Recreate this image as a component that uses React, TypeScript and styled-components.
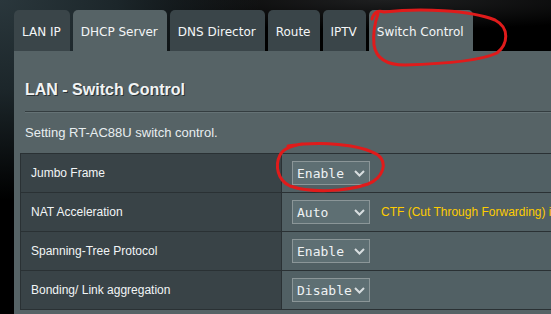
import React from "react";
import styled, { createGlobalStyle } from "styled-components";

const GlobalStyle = createGlobalStyle`
  html, body {
    margin: 0;
    padding: 0;
    width: 551px;
    height: 314px;
    overflow: hidden;
    background: #000;
  }
  body {
    font-family: "Liberation Sans", Arial, sans-serif;
  }
`;

const Page = styled.div`
  position: relative;
  width: 551px;
  height: 314px;
  overflow: hidden;
  padding: 10px 0 0 14px;
  box-sizing: border-box;
  background:
    radial-gradient(ellipse 260px 200px at 0% 0%, #2a373c 0%, #1c262a 45%, rgba(0,0,0,0) 100%),
    radial-gradient(ellipse 300px 30px at 70% 0%, #1e1f20 0%, rgba(0,0,0,0) 100%),
    #000;
`;

const Tabs = styled.div`
  display: flex;
  gap: 3px;
  height: 41px;
`;

const Tab = styled.div<{ $active?: boolean }>`
  display: flex;
  align-items: center;
  padding: 3px 9px 0 8px;
  border-radius: 5px 5px 0 0;
  background: ${(p) => (p.$active ? "#566366" : "#3a4549")};
  color: #f4f6f7;
  font-family: "DejaVu Sans", Verdana, sans-serif;
  font-size: 12px;
  white-space: nowrap;
`;

const Panel = styled.div`
  width: 760px;
  height: 300px;
  background: #566366;
  padding: 0 0 0 6px;
  box-sizing: border-box;
`;

const Header = styled.div`
  padding-left: 5px;
  padding-top: 30px;
`;

const Title = styled.h1`
  margin: 0;
  font-family: "Liberation Sans", Arial, sans-serif;
  font-weight: bold;
  font-size: 16px;
  line-height: 18px;
  color: #f2f4f4;
  text-shadow: 1px 1px 0 #2b3336;
`;

const Rule = styled.div`
  margin-top: 12px;
  height: 1px;
  background: #343d40;
  border-bottom: 1px solid #657275;
`;

const Description = styled.p`
  margin: 12px 0 0 0;
  font-size: 13px;
  line-height: 16px;
  color: #e8eef0;
`;

const Table = styled.table`
  margin-top: 12px;
  border-collapse: collapse;
  table-layout: fixed;
  width: 750px;
`;

const Row = styled.tr`
  height: 39px;
`;

const Label = styled.th`
  width: 261px;
  box-sizing: border-box;
  padding: 0 0 0 10px;
  text-align: left;
  font-weight: normal;
  font-size: 12px;
  color: #f2f5f6;
  background: #394347;
  border: 1px solid #2a3134;
`;

const Cell = styled.td`
  padding: 0 0 0 10px;
  background: #516064;
  border: 1px solid #2a3134;
  overflow: hidden;
`;

const CellInner = styled.div`
  display: flex;
  align-items: center;
`;

const Select = styled.div`
  flex: none;
  width: 78px;
  height: 24px;
  box-sizing: border-box;
  display: flex;
  align-items: center;
  justify-content: space-between;
  padding: 0 4px 0 4px;
  border: 1px solid #8b9698;
  background: #5e6f73;
  color: #eef2f3;
  font-family: "DejaVu Sans Mono", "Liberation Mono", monospace;
  font-size: 13px;
`;

const Hint = styled.span`
  margin-left: 11px;
  color: #ffcc00;
  font-size: 12px;
  white-space: nowrap;
`;

const Annotations = styled.svg`
  position: absolute;
  left: 0;
  top: 0;
  width: 551px;
  height: 314px;
  pointer-events: none;
`;

const Chevron = () => (
  <svg width="11" height="7" viewBox="0 0 11 7">
    <path d="M1 1 L5.5 5.5 L10 1" fill="none" stroke="#d8dee0" strokeWidth="2" />
  </svg>
);

type Setting = { label: string; value: string; hint?: string };

const settings: Setting[] = [
  { label: "Jumbo Frame", value: "Enable" },
  {
    label: "NAT Acceleration",
    value: "Auto",
    hint: "CTF (Cut Through Forwarding) is disabled because of the following reason(s):",
  },
  { label: "Spanning-Tree Protocol", value: "Enable" },
  { label: "Bonding/ Link aggregation", value: "Disable" },
];

const tabs = ["LAN IP", "DHCP Server", "DNS Director", "Route", "IPTV", "Switch Control"];

export default function App() {
  return (
    <>
      <GlobalStyle />
      <Page>
        <Tabs>
          {tabs.map((t) => (
            <Tab key={t} $active={t === "DHCP Server" || t === "Switch Control"}>
              {t}
            </Tab>
          ))}
        </Tabs>
        <Panel>
          <Header>
            <Title>LAN - Switch Control</Title>
            <Rule />
            <Description>Setting RT-AC88U switch control.</Description>
          </Header>
          <Table>
            <tbody>
              {settings.map((s) => (
                <Row key={s.label}>
                  <Label>{s.label}</Label>
                  <Cell>
                    <CellInner>
                      <Select>
                        <span>{s.value}</span>
                        <Chevron />
                      </Select>
                      {s.hint && <Hint>{s.hint}</Hint>}
                    </CellInner>
                  </Cell>
                </Row>
              ))}
            </tbody>
          </Table>
        </Panel>
        <Annotations viewBox="0 0 551 314">
          <path
            d="M372 19 C374 12 378 10 384 12 C420 8 470 10 495 20 C510 28 508 44 497 53 C480 61 440 64 405 65 C385 65 376 58 374 45 C373 35 374 25 378 14"
            fill="none"
            stroke="#e01b1b"
            strokeWidth="3"
            strokeLinecap="round"
          />
          <path
            d="M288 146 C320 141 360 144 378 155 C388 163 383 178 368 184 C345 192 310 193 290 186 C277 180 275 165 280 155 C283 149 290 146 302 144"
            fill="none"
            stroke="#e01b1b"
            strokeWidth="3"
            strokeLinecap="round"
          />
        </Annotations>
      </Page>
    </>
  );
}
